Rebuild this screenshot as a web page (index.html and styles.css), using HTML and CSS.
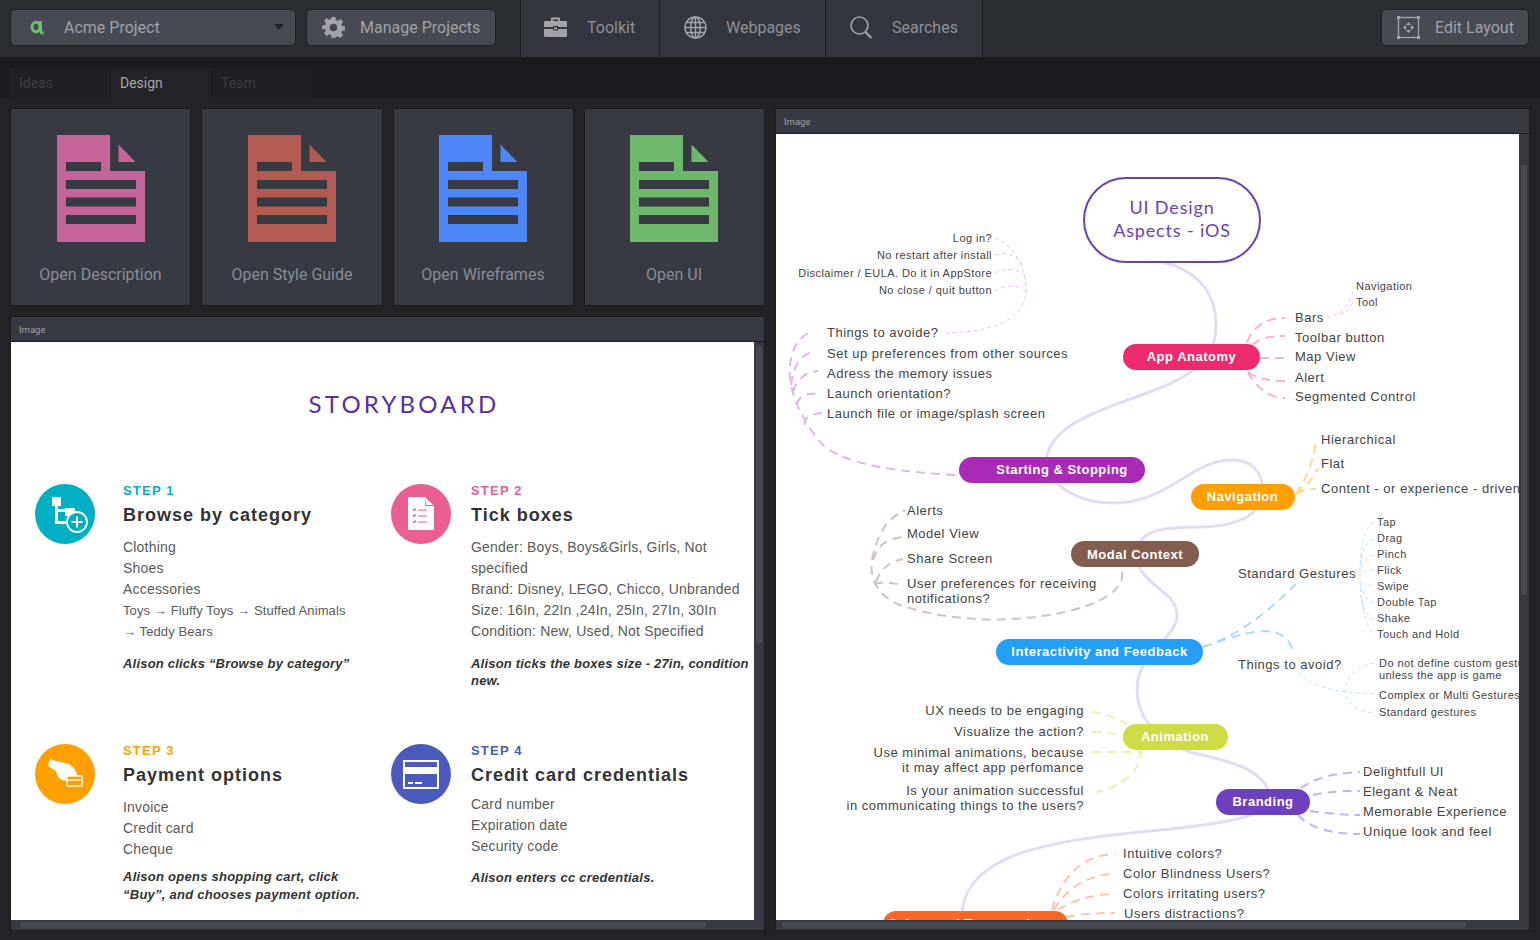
FILE: index.html
```html
<!DOCTYPE html>
<html>
<head>
	<meta charset="utf-8">
	<title>Acme Project</title>
	<link rel="stylesheet" href="styles.css">
</head>
<body>

	<svg class="defs">
		<symbol id="doc" viewBox="0 0 88 107">
			<path fill-rule="evenodd" d="M0 0H53V36H88V107H0ZM9 27V36H44V27ZM9 45V54H79V45ZM9 62.500V71.500H79V62.500ZM9 80V89H79V80Z"/>
			<path d="M61.500 9.500L78.500 27H61.500Z"/>
		</symbol>
	</svg>

	<header class="topbar">
		<button class="btn btn-project">
			<svg class="logo" width="14" height="16" viewBox="0 0 14 16"><ellipse cx="6" cy="8" rx="4" ry="4.800" fill="none" stroke="#6cc070" stroke-width="3"/><path d="M10.500 2V11Q10.500 14 13.500 14" fill="none" stroke="#6cc070" stroke-width="3"/></svg>
			<span class="btn-label">Acme Project</span>
			<span class="caret"></span>
		</button>
		<button class="btn btn-manage">
			<svg width="23" height="23" viewBox="0 0 24 24"><path fill="#a2a4aa" fill-rule="evenodd" d="M10 1h4l.6 3.100 1.900.8 2.600-1.800 2.800 2.800-1.800 2.600.8 1.900 3.100.6v4l-3.100.6-.8 1.900 1.800 2.600-2.800 2.800-2.600-1.800-1.900.8L14 23h-4l-.6-3.100-1.900-.8-2.600 1.800-2.800-2.800 1.800-2.600-.8-1.900L0 14v-4l3.100-.6.800-1.900-1.800-2.600 2.800-2.800 2.600 1.800 1.900-.8ZM12 8a4 4 0 1 0 0 8 4 4 0 0 0 0-8Z"/></svg>
			<span>Manage Projects</span>
		</button>
		<nav class="nav">
			<a class="nav-item nav-toolkit">
				<svg width="23" height="21" viewBox="0 0 23 21"><path fill="#a2a4aa" d="M7 4V1.500Q7 .5 8 .5H15Q16 .5 16 1.500V4H14V2.500H9V4ZM0 5Q0 4 1 4H22Q23 4 23 5V10H14V9H9V10H0ZM0 12H9V13.500H14V12H23V19Q23 20 22 20H1Q0 20 0 19ZM10 10.500H13V12.500H10Z"/></svg>
				<span>Toolkit</span>
			</a>
			<a class="nav-item nav-webpages">
				<svg width="23" height="23" viewBox="0 0 23 23" fill="none" stroke="#a2a4aa" stroke-width="1.500"><circle cx="11.500" cy="11.500" r="10.500"/><ellipse cx="11.500" cy="11.500" rx="4.800" ry="10.500"/><path d="M11.500 1V22M1 11.500H22M2.500 6.500H20.500M2.500 16.500H20.500"/></svg>
				<span>Webpages</span>
			</a>
			<a class="nav-item nav-searches">
				<svg width="23" height="23" viewBox="0 0 23 23" fill="none" stroke="#a2a4aa" stroke-width="1.600"><circle cx="9.500" cy="9.500" r="8.500"/><path d="M15.500 16L21.500 22" stroke-width="2.200"/></svg>
				<span>Searches</span>
			</a>
		</nav>
		<button class="btn btn-edit">
			<svg width="23" height="23" viewBox="0 0 23 23"><g fill="none" stroke="#a2a4aa" stroke-width="1.300"><rect x="1.500" y="1.500" width="20" height="20"/></g><g fill="#a2a4aa"><rect width="3" height="3"/><rect x="20" width="3" height="3"/><rect y="20" width="3" height="3"/><rect x="20" y="20" width="3" height="3"/><path d="M11.500 6L14 9H9ZM11.500 17L9 14H14ZM6 11.500L9 9V14ZM17 11.500L14 14V9Z"/></g></svg>
			<span>Edit Layout</span>
		</button>
	</header>

	<div class="tabs">
		<a class="tab">Ideas</a>
		<a class="tab tab-active">Design</a>
		<a class="tab">Team</a>
	</div>

	<main class="workspace">
		<div class="left">
			<div class="cards">
				<a class="card"><svg class="doc doc-pink"><use href="#doc"/></svg><span>Open Description</span></a>
				<a class="card card-wide"><svg class="doc doc-red"><use href="#doc"/></svg><span>Open Style Guide</span></a>
				<a class="card card-nudge"><svg class="doc doc-blue"><use href="#doc"/></svg><span>Open Wireframes</span></a>
				<a class="card card-nudge"><svg class="doc doc-green"><use href="#doc"/></svg><span>Open UI</span></a>
			</div>

			<section class="panel panel-story">
				<div class="panel-title">Image</div>
				<div class="panel-body">
					<div class="sheet story">
						<h1 class="story-title">STORYBOARD</h1>
						<div class="steps">

							<article class="step">
								<svg class="step-icon" viewBox="0 0 60 60">
									<circle cx="30" cy="30" r="30" fill="#00afc4"/>
									<path fill="#fff" d="M17 13H26V22H23V25H30V24H40V32H30V28H23V37H31V40H20V22H17Z"/>
									<circle cx="42" cy="38" r="10" fill="#00afc4" stroke="#fff" stroke-width="1.800"/>
									<path stroke="#fff" stroke-width="2" d="M42 32.500V43.500M36.500 38H47.500"/>
								</svg>
								<div class="step-text">
									<div class="step-no step-no-teal">STEP 1</div>
									<h2>Browse by category</h2>
									<p class="step-list">Clothing<br>Shoes<br>Accessories<br><span class="small">Toys → Fluffy Toys → Stuffed Animals<br>→ Teddy Bears</span></p>
									<p class="step-note">Alison clicks “Browse by category”</p>
								</div>
							</article>

							<article class="step step-right">
								<svg class="step-icon" viewBox="0 0 60 60">
									<circle cx="30" cy="30" r="30" fill="#e95f91"/>
									<path fill="#fff" d="M17 13H34L43 22V46H17Z"/>
									<path fill="#e95f91" d="M34 13L35 21H43L42.500 22H34Z"/>
									<path fill="none" stroke="#e95f91" stroke-width="1.200" d="M22 25L23 26.500L25 24.500M22 31L23 32.500L25 30.500M22 37L23 38.500L25 36.500M27 26H36M27 32H36M27 38H36"/>
								</svg>
								<div class="step-text">
									<div class="step-no step-no-pink">STEP 2</div>
									<h2>Tick boxes</h2>
									<p class="step-list">Gender: Boys, Boys&amp;Girls, Girls, Not<br>specified<br>Brand: Disney, LEGO, Chicco, Unbranded<br>Size: 16In, 22In ,24In, 25In, 27In, 30In<br>Condition: New, Used, Not Specified</p>
									<p class="step-note step-note-tight">Alison ticks the boxes size - 27in, condition<br>new.</p>
								</div>
							</article>

							<article class="step">
								<svg class="step-icon" viewBox="0 0 60 60">
									<circle cx="30" cy="30" r="30" fill="#ffa000"/>
									<path fill="#fff" d="M15 15L21 17L34 20Q40 24 42 30L41 34L34 34L33 37L27 36L23 33L21 27L13 22Z"/>
									<rect x="32" y="32" width="15" height="10" fill="#ffa000" stroke="#fff" stroke-width="1.300"/>
									<path stroke="#fff" stroke-width="1.300" d="M32 36H47"/>
								</svg>
								<div class="step-text">
									<div class="step-no step-no-orange">STEP 3</div>
									<h2>Payment options</h2>
									<p class="step-list">Invoice<br>Credit card<br>Cheque</p>
									<p class="step-note step-note-pay">Alison opens shopping cart, click<br>“Buy”, and chooses payment option.</p>
								</div>
							</article>

							<article class="step step-right">
								<svg class="step-icon" viewBox="0 0 60 60">
									<circle cx="30" cy="30" r="30" fill="#4a5bbd"/>
									<path fill="#fff" fill-rule="evenodd" d="M12 16H48V45H12ZM14 18V23H46V18ZM14 30V43H46V30Z"/>
									<rect x="17" y="38" width="5" height="2" fill="#fff"/><rect x="24" y="38" width="7" height="2" fill="#fff"/>
								</svg>
								<div class="step-text">
									<div class="step-no step-no-blue">STEP 4</div>
									<h2>Credit card credentials</h2>
									<p class="step-list step-list-up">Card number<br>Expiration date<br>Security code</p>
									<p class="step-note step-note-card">Alison enters cc credentials.</p>
								</div>
							</article>

						</div>
					</div>
					<div class="scroll-v"><i class="thumb-story-v"></i></div>
					<div class="scroll-h"><i class="thumb-story-h"></i></div>
				</div>
			</section>
		</div>

		<section class="panel panel-map">
			<div class="panel-title">Image</div>
			<div class="panel-body">
				<div class="sheet">
					<svg class="map" width="743" height="786" viewBox="776 134 743 786">
						<!-- main branch -->
						<path class="trunk" d="M1165 263C1200 272 1216 295 1216 325C1216 350 1208 368 1160 388C1110 408 1052 420 1046 460C1050 490 1085 503 1112 503C1170 503 1190 460 1232 460C1250 460 1262 470 1263 490C1262 515 1240 526 1200 527C1160 527 1138 530 1136 555C1138 585 1177 590 1177 615C1177 640 1137 650 1137 690C1137 715 1155 740 1190 752C1220 760 1262 765 1270 795C1270 815 1240 822 1160 830C1060 840 965 850 962 915"/>

						<!-- starting and stopping -->
						<g class="dash dash-purple">
							<path d="M955 475C900 472 845 465 823 445C805 425 792 400 790 377C788 360 795 335 813 332"/>
							<path d="M791 385C794 365 800 355 813 352"/>
							<path d="M793 392C796 380 805 372 818 371"/>
							<path d="M797 405C798 397 805 393 818 394"/>
							<path d="M805 425C803 418 810 413 830 412"/>
						</g>
						<g class="dot dot-purple">
							<path d="M995 238C1015 245 1026 270 1026 290C1026 312 1005 333 943 333"/>
							<path d="M995 255C1010 250 1022 260 1024 268"/>
							<path d="M995 273C1008 266 1025 270 1026 280"/>
							<path d="M995 291C1008 283 1025 285 1026 295"/>
						</g>
						<!-- app anatomy -->
						<g class="dash dash-pink">
							<path d="M1247 342C1252 330 1262 318 1285 318"/>
							<path d="M1252 345C1260 338 1270 336 1285 336"/>
							<path d="M1260 358H1285"/>
							<path d="M1248 372C1255 378 1268 381 1285 381"/>
							<path d="M1248 372C1254 385 1268 398 1285 398"/>
						</g>
						<g class="dot dot-pink">
							<path d="M1327 318C1345 312 1350 305 1354 287"/>
							<path d="M1340 314C1347 312 1350 308 1354 300"/>
						</g>
						<!-- navigation -->
						<g class="dash dash-yellow">
							<path d="M1296 494C1305 480 1313 465 1316 440"/>
							<path d="M1296 494C1305 488 1312 480 1318 468"/>
							<path d="M1296 494C1302 490 1310 489 1316 489"/>
						</g>
						<!-- modal context -->
						<g class="dash dash-brown">
							<path d="M1122 572C1125 590 1100 605 1060 613C1010 623 950 622 900 605C875 595 868 575 873 555C878 535 885 520 905 510"/>
							<path d="M873 560C878 545 885 540 902 537"/>
							<path d="M876 582C880 570 888 562 903 559"/>
							<path d="M874 584C882 582 890 583 898 584"/>
						</g>
						<!-- interactivity -->
						<g class="dash dash-blue">
							<path d="M1203 647C1240 635 1270 610 1296 584"/>
							<path d="M1203 647C1225 640 1245 631 1268 631C1285 632 1292 645 1293 652"/>
						</g>
						<g class="dot dot-blue">
							<path d="M1374 522C1365 525 1360 545 1360 575C1360 600 1365 625 1374 636"/>
							<path d="M1374 539C1365 542 1361 555 1360 570"/>
							<path d="M1374 555C1366 557 1361 565 1361 572"/>
							<path d="M1374 570C1366 570 1362 572 1361 576"/>
							<path d="M1372 586C1366 585 1362 582 1361 578"/>
							<path d="M1374 603C1366 600 1362 592 1361 585"/>
							<path d="M1374 620C1366 615 1362 605 1361 595"/>
							<path d="M1298 672C1315 690 1340 692 1376 694"/>
							<path d="M1374 663C1355 665 1345 680 1345 692C1345 700 1355 711 1374 713"/>
						</g>
						<!-- animation -->
						<g class="dash dash-lime">
							<path d="M1092 712C1105 713 1115 718 1127 724"/>
							<path d="M1092 732C1102 732 1110 733 1119 735"/>
							<path d="M1092 752H1141"/>
							<path d="M1142 750C1140 770 1125 786 1096 792"/>
						</g>
						<!-- branding -->
						<g class="dash dash-violet">
							<path d="M1301 788C1312 780 1330 773 1360 772"/>
							<path d="M1313 795C1325 792 1340 791 1360 791"/>
							<path d="M1310 811C1325 813 1340 815 1360 815"/>
							<path d="M1298 815C1310 828 1330 834 1360 834"/>
						</g>
						<!-- colors -->
						<g class="dash dash-coral">
							<path d="M1052 910C1060 880 1080 855 1115 854"/>
							<path d="M1054 910C1065 890 1085 875 1115 874"/>
							<path d="M1058 910C1070 902 1090 894 1115 894"/>
							<path d="M1066 917C1080 914 1095 913 1115 913"/>
						</g>

						<!-- centre -->
						<rect class="centre" x="1084" y="178" width="176" height="84" rx="42"/>
						<text class="centre-text" x="1172" y="214">UI Design</text>
						<text class="centre-text" x="1172" y="237">Aspects - iOS</text>

						<!-- nodes -->
						<rect class="pill pill-pink" x="1123" y="344" width="137" height="26" rx="13"/>
						<text class="pill-text" x="1191.500" y="361">App Anatomy</text>
						<rect class="pill pill-purple" x="959" y="457" width="186" height="26" rx="13"/>
						<text class="pill-text" x="1062" y="474">Starting &amp; Stopping</text>
						<rect class="pill pill-orange" x="1191" y="484" width="104" height="26" rx="13"/>
						<text class="pill-text" x="1242.500" y="501">Navigation</text>
						<rect class="pill pill-brown" x="1071" y="541" width="128" height="26" rx="13"/>
						<text class="pill-text" x="1135" y="559">Modal Context</text>
						<rect class="pill pill-blue" x="996" y="639" width="207" height="26" rx="13"/>
						<text class="pill-text" x="1099.500" y="656">Interactivity and Feedback</text>
						<rect class="pill pill-lime" x="1123" y="724" width="105" height="26" rx="13"/>
						<text class="pill-text" x="1175" y="741">Animation</text>
						<rect class="pill pill-violet" x="1216" y="789" width="94" height="26" rx="13"/>
						<text class="pill-text" x="1263" y="806">Branding</text>
						<rect class="pill pill-coral" x="883" y="911" width="185" height="26" rx="13"/>
						<text class="pill-text" x="965" y="928">Colors and Typography</text>

						<!-- leaves -->
						<g class="leaf-end leaf-sm">
							<text x="992" y="242">Log in?</text>
							<text x="992" y="259">No restart after install</text>
							<text x="992" y="277">Disclaimer / EULA. Do it in AppStore</text>
							<text x="992" y="294">No close / quit button</text>
						</g>
						<g class="leaf">
							<text x="827" y="337">Things to avoide?</text>
							<text x="827" y="358">Set up preferences from other sources</text>
							<text x="827" y="378">Adress the memory issues</text>
							<text x="827" y="398">Launch orientation?</text>
							<text x="827" y="418">Launch file or image/splash screen</text>

							<text x="1295" y="322">Bars</text>
							<text x="1295" y="342">Toolbar button</text>
							<text x="1295" y="361">Map View</text>
							<text x="1295" y="382">Alert</text>
							<text x="1295" y="401">Segmented Control</text>

							<text x="1321" y="444">Hierarchical</text>
							<text x="1321" y="468">Flat</text>
							<text x="1321" y="493">Content - or experience - driven</text>

							<text x="907" y="515">Alerts</text>
							<text x="907" y="538">Model View</text>
							<text x="907" y="563">Share Screen</text>
							<text x="907" y="588">User preferences for receiving</text>
							<text x="907" y="603">notifications?</text>

							<text x="1238" y="578">Standard Gestures</text>
							<text x="1238" y="669">Things to avoid?</text>

							<text x="1363" y="776">Delightfull UI</text>
							<text x="1363" y="796">Elegant &amp; Neat</text>
							<text x="1363" y="816">Memorable Experience</text>
							<text x="1363" y="836">Unique look and feel</text>

							<text x="1123" y="858">Intuitive colors?</text>
							<text x="1123" y="878">Color Blindness Users?</text>
							<text x="1123" y="898">Colors irritating users?</text>
							<text x="1124" y="918">Users distractions?</text>
						</g>
						<g class="leaf-end leaf">
							<text x="1084" y="715">UX needs to be engaging</text>
							<text x="1084" y="736">Visualize the action?</text>
							<text x="1084" y="757">Use minimal animations, because</text>
							<text x="1084" y="772">it may affect app perfomance</text>
							<text x="1084" y="795">Is your animation successful</text>
							<text x="1084" y="810">in communicating things to the users?</text>
						</g>
						<g class="leaf-sm">
							<text x="1356" y="290">Navigation</text>
							<text x="1356" y="306">Tool</text>
							<text x="1377" y="526">Tap</text>
							<text x="1377" y="542">Drag</text>
							<text x="1377" y="558">Pinch</text>
							<text x="1377" y="574">Flick</text>
							<text x="1377" y="590">Swipe</text>
							<text x="1377" y="606">Double Tap</text>
							<text x="1377" y="622">Shake</text>
							<text x="1377" y="638">Touch and Hold</text>
							<text x="1379" y="667">Do not define custom gestures</text>
							<text x="1379" y="679">unless the app is game</text>
							<text x="1379" y="699">Complex or Multi Gestures</text>
							<text x="1379" y="716">Standard gestures</text>
						</g>
					</svg>
				</div>
				<div class="scroll-v"><i class="thumb-map-v"></i></div>
				<div class="scroll-h"><i class="thumb-map-h"></i></div>
			</div>
		</section>
	</main>

</body>
</html>
```

FILE: styles.css
```css
* {
	box-sizing: border-box;
}

html, body {
	margin: 0;
	padding: 0;
	height: 100%;
	overflow: hidden;
}

body {
	width: 1540px;
	height: 940px;
	display: flex;
	flex-direction: column;
	background: #222327;
	font-family: Roboto, sans-serif;
}

.defs {
	display: none;
}

/* top bar */

.topbar {
	height: 57px;
	flex: none;
	display: flex;
	align-items: center;
	padding: 0 10px;
	background: #2a2d32;
}

.btn {
	height: 37px;
	margin-bottom: 3px;
	display: flex;
	align-items: center;
	padding: 0;
	background: #474a52;
	border: 1px solid #1e2024;
	border-radius: 5px;
	color: #a0a2a8;
	font: 16px Roboto, sans-serif;
}

.btn-project {
	width: 286px;
	padding-left: 19px;
	margin-right: 10px;
}

.btn-label {
	margin-left: 20px;
}

.caret {
	margin-left: auto;
	margin-right: 11px;
	border-left: 5px solid transparent;
	border-right: 5px solid transparent;
	border-top: 6px solid #1e2024;
}

.btn-manage {
	width: 190px;
	padding-left: 15px;
	gap: 15px;
}

.nav {
	display: flex;
	align-self: stretch;
	margin-left: 24px;
	background: #33363e;
	border-left: 1px solid #1c1d21;
}

.nav-item {
	display: flex;
	align-items: center;
	gap: 19px;
	padding-bottom: 3px;
	border-right: 1px solid #1c1d21;
	color: #8e9197;
	font-size: 16px;
}

.nav-toolkit {
	width: 139px;
	padding-left: 23px;
	gap: 20px;
}

.nav-webpages {
	width: 166px;
	padding-left: 24px;
}

.nav-searches {
	width: 157px;
	padding-left: 24px;
}

.btn-edit {
	width: 148px;
	margin-left: auto;
	margin-right: 1px;
	padding-left: 15px;
	gap: 15px;
}

/* tabs */

.tabs {
	height: 41px;
	flex: none;
	display: flex;
	gap: 1px;
	padding: 11px 0 0 10px;
	background: #1a1b1f;
}

.tab {
	width: 100px;
	height: 30px;
	padding-left: 9px;
	line-height: 31px;
	font-size: 14px;
	color: #3b3d43;
	background: #1f2024;
}

.tab-active {
	color: #a4a6ac;
	background: #222327;
}

/* workspace */

.workspace {
	flex: 1;
	min-height: 0;
	display: grid;
	grid-template-columns: 755px 755px;
	gap: 10px;
	padding: 10px 10px 9px 10px;
}

.left {
	display: flex;
	flex-direction: column;
	gap: 10px;
	min-height: 0;
}

.cards {
	display: flex;
	gap: 10px;
	height: 198px;
	flex: none;
}

.card {
	width: 181px;
	display: flex;
	flex-direction: column;
	align-items: center;
	padding-top: 26px;
	background: #373a42;
	border: 1px solid #1b1c20;
	color: #8a8d94;
	font-size: 16px;
}

.card-wide {
	width: 182px;
}

.card-nudge {
	padding-right: 1px;
}

.card span {
	margin-top: 23px;
	white-space: nowrap;
}

.doc {
	width: 88px;
	height: 107px;
	flex: none;
}

.doc-pink { fill: #c4649a; }
.doc-red { fill: #b35b50; }
.doc-blue { fill: #4c86f7; }
.doc-green { fill: #6db86b; }

.panel {
	flex: 1;
	min-height: 0;
	display: flex;
	flex-direction: column;
	background: #373a42;
	border: 1px solid #1b1c20;
}

.panel-title {
	height: 25px;
	flex: none;
	padding-left: 8px;
	line-height: 25px;
	font-size: 9.500px;
	color: #a0a2a8;
	border-bottom: 1px solid #1b1c20;
}

.panel-body {
	flex: 1;
	min-height: 0;
	display: grid;
	grid-template-columns: 1fr 10px;
	grid-template-rows: 1fr 10px;
}

.sheet {
	min-width: 0;
	min-height: 0;
	overflow: hidden;
	background: #fff;
}

.scroll-v {
	padding: 3px 2px 0;
}

.scroll-v i {
	display: block;
	background: #474a52;
	border-radius: 3px;
}

.scroll-h {
	grid-column: 1 / 3;
	padding-top: 2px;
}

.scroll-h i {
	display: block;
	height: 6px;
	background: #474a52;
	border-radius: 3px;
}

.thumb-story-v { height: 298px; }
.thumb-story-h { width: 686px; margin-left: 9px; }
.thumb-map-v { height: 430px; margin-top: 28px; }
.thumb-map-h { width: 684px; margin-left: 6px; }

/* storyboard */

.story {
	font-family: "Liberation Sans", sans-serif;
	color: #333;
}

.story-title {
	margin: 48px 0 0 42px;
	width: 702px;
	height: 94px;
	text-align: center;
	font: 400 24px/28px Lato, sans-serif;
	letter-spacing: 3.200px;
	color: #5a2ea6;
}

.steps {
	display: grid;
	grid-template-columns: 356px 1fr;
	grid-template-rows: 260px auto;
	padding-left: 24px;
}

.step {
	display: flex;
	gap: 28px;
	white-space: nowrap;
}

.step-right {
	gap: 20px;
}

.step-icon {
	width: 60px;
	height: 60px;
	flex: none;
}

.step-no {
	font-size: 13px;
	line-height: 14px;
	font-weight: bold;
	letter-spacing: 1.200px;
}

.step-no-teal { color: #00afc4; }
.step-no-pink { color: #e95f91; }
.step-no-orange { color: #ffa000; }
.step-no-blue { color: #4a5bbd; }

.step h2 {
	margin: 6px 0 0;
	font-size: 18px;
	line-height: 22px;
	letter-spacing: 1px;
	color: #333;
}

.step-list {
	margin: 11px 0 0;
	font-size: 14px;
	line-height: 21px;
	letter-spacing: .2px;
	color: #5a5a5a;
}

.step-list-up {
	margin-top: 8px;
}

.small {
	font-size: 13px;
	letter-spacing: .1px;
}

.step-note {
	margin: 13px 0 0;
	font-size: 13px;
	line-height: 18px;
	font-style: italic;
	font-weight: bold;
	color: #333;
	letter-spacing: .2px;
}

.step-note-tight {
	line-height: 17px;
}

.step-note-pay {
	margin-top: 8px;
	letter-spacing: .25px;
}

.step-note-card {
	margin-top: 12px;
	letter-spacing: .25px;
}

/* mind map */

.map {
	display: block;
}

.map path {
	fill: none;
}

.trunk {
	stroke: #e4dcf3;
	stroke-width: 3;
}

.dash {
	stroke-width: 2;
	stroke-dasharray: 9 6;
}

.dot {
	stroke-width: 1;
	stroke-dasharray: 4 3;
}

.dash-purple { stroke: #e3b6ea; }
.dot-purple { stroke: #e9c4ef; }
.dash-pink { stroke: #fbb0cb; }
.dot-pink { stroke: #fbc0d6; }
.dash-yellow { stroke: #ffd890; }
.dash-brown { stroke: #d2c4bc; }
.dash-blue { stroke: #acdcfb; }
.dot-blue { stroke: #bde3fc; }
.dash-lime { stroke: #ebf0b0; }
.dash-violet { stroke: #c7b2e6; }
.dash-coral { stroke: #ffc2aa; }

.centre {
	fill: #fff;
	stroke: #6b3fbb;
	stroke-width: 2;
}

.centre-text {
	font: 18px Lato, sans-serif;
	letter-spacing: .850px;
	fill: #6b3fbb;
	text-anchor: middle;
}

.pill-pink { fill: #ee2a6f; }
.pill-purple { fill: #a82ab5; }
.pill-orange { fill: #ffa000; }
.pill-brown { fill: #835e4e; }
.pill-blue { fill: #23a0f5; }
.pill-lime { fill: #cfdc45; }
.pill-violet { fill: #6e40bd; }
.pill-coral { fill: #ff6626; }

.pill-text {
	font: bold 13px "Liberation Sans", sans-serif;
	letter-spacing: .5px;
	fill: #fff;
	text-anchor: middle;
}

.leaf {
	font: 13px "Liberation Sans", sans-serif;
	letter-spacing: .52px;
	fill: #444;
}

.leaf-sm {
	font: 11px "Liberation Sans", sans-serif;
	letter-spacing: .44px;
	fill: #444;
}

.leaf-end {
	text-anchor: end;
}
```
